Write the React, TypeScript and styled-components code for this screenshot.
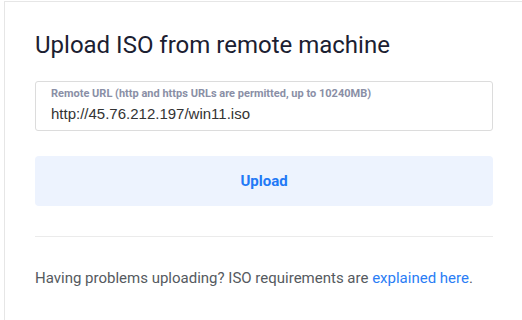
import React from "react";
import styled, { createGlobalStyle } from "styled-components";

const Global = createGlobalStyle`
  html, body { margin: 0; padding: 0; background: #ffffff; overflow: hidden; }
  body { font-family: Roboto, "Noto Sans", sans-serif; }
`;

const Page = styled.div`
  padding: 1px 0 0 4px;
  width: 522px;
  height: 320px;
  box-sizing: border-box;
  overflow: hidden;
`;

const Card = styled.div`
  border-top: 1px solid #e6e6e6;
  border-left: 1px solid #e6e6e6;
  padding: 28px 51px 0 30px;
  width: 540px;
  height: 330px;
  box-sizing: border-box;
  display: flex;
  flex-direction: column;
`;

const Title = styled.h1`
  margin: 0;
  font-size: 24px;
  font-weight: 400;
  line-height: 30px;
  color: #1b2031;
`;

const Field = styled.div`
  margin-top: 21px;
  border: 1px solid #dcdcdc;
  border-radius: 3px;
  height: 50px;
  box-sizing: border-box;
  padding: 5px 15px 0;
  display: flex;
  flex-direction: column;
`;

const Label = styled.label`
  font-size: 11px;
  font-weight: 700;
  line-height: 13px;
  color: #8a8fa6;
`;

const Value = styled.div`
  margin-top: 4px;
  font-family: "Liberation Sans", Arial, sans-serif;
  font-size: 15px;
  line-height: 20px;
  color: #333333;
`;

const Button = styled.button`
  margin-top: 25px;
  height: 50px;
  border: none;
  border-radius: 4px;
  background: #edf3fe;
  color: #2279f6;
  font-family: Roboto, "Noto Sans", sans-serif;
  font-size: 15px;
  font-weight: 700;
  cursor: pointer;
`;

const Divider = styled.hr`
  margin: 30px 0 0;
  border: none;
  border-top: 1px solid #ebebeb;
`;

const Footer = styled.p`
  margin: 31px 0 0;
  font-size: 15px;
  line-height: 20px;
  color: #555a60;
`;

const Link = styled.a`
  color: #2a7df5;
  text-decoration: none;
`;

export default function App() {
  return (
    <>
      <Global />
      <Page>
        <Card>
          <Title>Upload ISO from remote machine</Title>
          <Field>
            <Label>Remote URL (http and https URLs are permitted, up to 10240MB)</Label>
            <Value>http://45.76.212.197/win11.iso</Value>
          </Field>
          <Button>Upload</Button>
          <Divider />
          <Footer>
            Having problems uploading? ISO requirements are <Link href="#">explained here</Link>.
          </Footer>
        </Card>
      </Page>
    </>
  );
}
